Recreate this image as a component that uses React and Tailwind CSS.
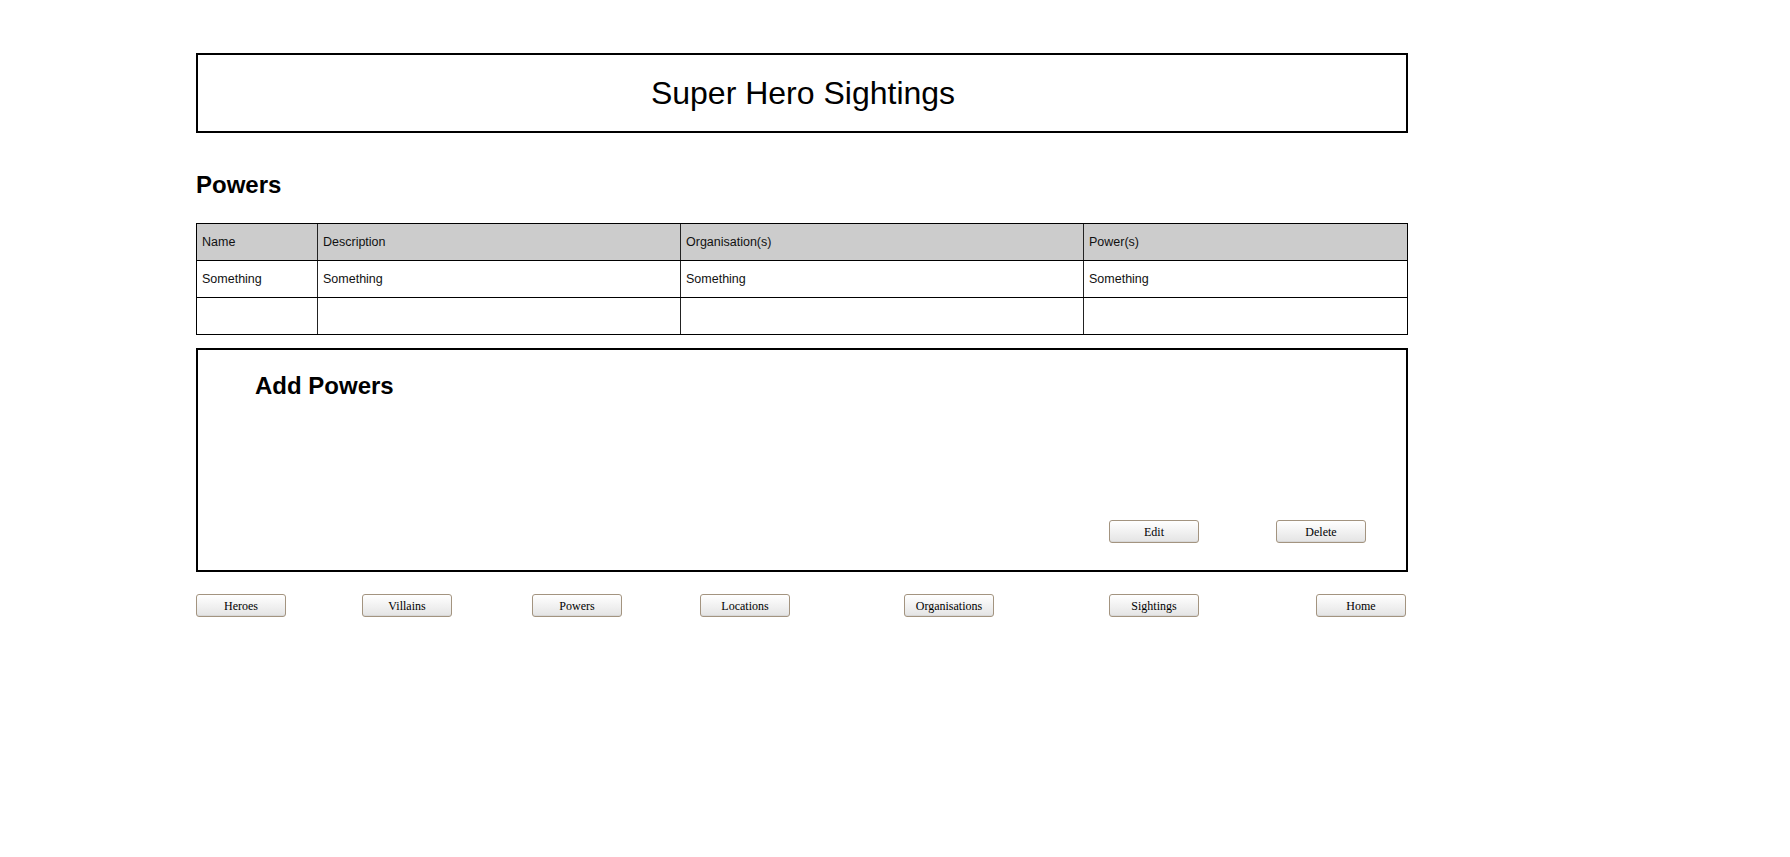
import React from 'react';

const columns = [
  { key: 'name', label: 'Name' },
  { key: 'description', label: 'Description' },
  { key: 'organisations', label: 'Organisation(s)' },
  { key: 'powers', label: 'Power(s)' },
];

const rows = [
  { name: 'Something', description: 'Something', organisations: 'Something', powers: 'Something' },
  { name: '', description: '', organisations: '', powers: '' },
];

const navLinks = [
  { label: 'Heroes', gap: 'ml-0' },
  { label: 'Villains', gap: 'ml-[76px]' },
  { label: 'Powers', gap: 'ml-[80px]' },
  { label: 'Locations', gap: 'ml-[78px]' },
  { label: 'Organisations', gap: 'ml-[114px]' },
  { label: 'Sightings', gap: 'ml-[115px]' },
  { label: 'Home', gap: 'ml-[117px]' },
];

const sans = "font-['Liberation_Sans',Arial,sans-serif]";

function MockButton({ label, className = '' }) {
  return (
    <button
      className={`w-[90px] h-[23px] rounded-[3px] border border-[#a39480] bg-linear-to-b from-white to-[#e4e4e4] text-[12px] leading-none text-black font-['Liberation_Serif','Times_New_Roman',serif] flex items-center justify-center shadow-[inset_0_-1px_0_#d8d8d8] ${className}`}
    >
      {label}
    </button>
  );
}

function Cell({ children, last, header }) {
  return (
    <div
      className={`h-[36px] flex items-center pl-[5px] text-[12.5px] text-[#111] ${sans} ${
        last ? '' : 'border-r border-[#222]'
      } ${header ? 'bg-[#cccccc]' : ''}`}
    >
      {children}
    </div>
  );
}

export default function App() {
  return (
    <div className="min-h-screen bg-white">
      <div className={`ml-[196px] w-[1212px] pt-[53px] ${sans}`}>
        <div className="h-[80px] border-2 border-black flex items-center justify-center">
          <h1 className="text-[32px] leading-none text-black pl-[2px]">Super Hero Sightings</h1>
        </div>

        <h2 className="mt-[40px] text-[24px] leading-[24px] font-bold text-black">Powers</h2>

        <div className="mt-[26px] border border-black">
          <div className="grid grid-cols-[121px_363px_403px_1fr] border-b border-black">
            {columns.map((c, i) => (
              <Cell key={c.key} header last={i === columns.length - 1}>
                {c.label}
              </Cell>
            ))}
          </div>
          {rows.map((r, ri) => (
            <div
              key={ri}
              className={`grid grid-cols-[121px_363px_403px_1fr] ${ri < rows.length - 1 ? 'border-b border-black' : ''}`}
            >
              {columns.map((c, i) => (
                <Cell key={c.key} last={i === columns.length - 1}>
                  {r[c.key]}
                </Cell>
              ))}
            </div>
          ))}
        </div>

        <div className="mt-[13px] h-[224px] border-2 border-black flex flex-col">
          <h2 className="pt-[24px] pl-[57px] text-[24px] leading-[24px] font-bold text-black">Add Powers</h2>
          <div className="flex-1" />
          <div className="flex justify-end pr-[40px] pb-[27px]">
            <MockButton label="Edit" />
            <MockButton label="Delete" className="ml-[77px]" />
          </div>
        </div>

        <nav className="mt-[22px] flex">
          {navLinks.map((n) => (
            <MockButton key={n.label} label={n.label} className={n.gap} />
          ))}
        </nav>
      </div>
    </div>
  );
}
